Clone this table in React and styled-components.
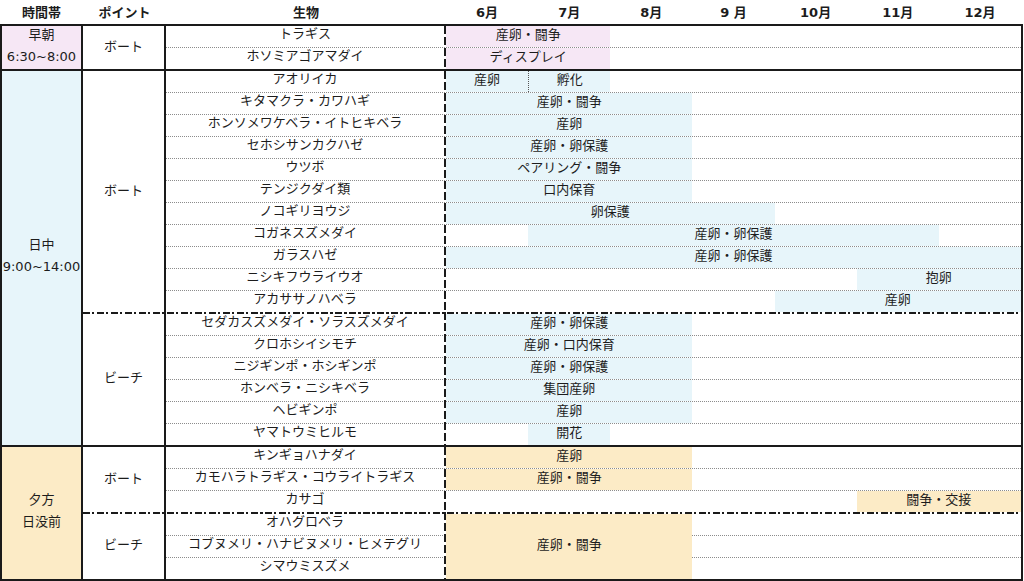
import React from "react";
import styled, { createGlobalStyle } from "styled-components";

const PINK = "#f6e7f5";
const BLUE = "#e7f5fa";
const ORANGE = "#fcebc6";

const GlobalStyle = createGlobalStyle`
  body {
    margin: 0;
    background: #fff;
    font-family: "DejaVu Sans", "Noto Sans CJK JP", sans-serif;
    color: #1c1c1c;
  }
`;

const months = ["6月", "7月", "8月", "9 月", "10月", "11月", "12月"];

const sections = [
  {
    time: ["早朝", "6:30~8:00"],
    color: PINK,
    groups: [
      {
        point: "ボート",
        rows: ["トラギス", "ホソミアゴアマダイ"],
        bands: [
          { row: 0, from: 0, to: 2, label: "産卵・闘争" },
          { row: 1, from: 0, to: 2, label: "ディスプレイ" },
        ],
      },
    ],
  },
  {
    time: ["日中", "9:00~14:00"],
    color: BLUE,
    groups: [
      {
        point: "ボート",
        rows: [
          "アオリイカ",
          "キタマクラ・カワハギ",
          "ホンソメワケベラ・イトヒキベラ",
          "セホシサンカクハゼ",
          "ウツボ",
          "テンジクダイ類",
          "ノコギリヨウジ",
          "コガネスズメダイ",
          "ガラスハゼ",
          "ニシキフウライウオ",
          "アカササノハベラ",
        ],
        bands: [
          { row: 0, from: 0, to: 1, label: "産卵" },
          { row: 0, from: 1, to: 2, label: "孵化", split: true },
          { row: 1, from: 0, to: 3, label: "産卵・闘争" },
          { row: 2, from: 0, to: 3, label: "産卵" },
          { row: 3, from: 0, to: 3, label: "産卵・卵保護" },
          { row: 4, from: 0, to: 3, label: "ペアリング・闘争" },
          { row: 5, from: 0, to: 3, label: "口内保育" },
          { row: 6, from: 0, to: 4, label: "卵保護" },
          { row: 7, from: 1, to: 6, label: "産卵・卵保護" },
          { row: 8, from: 0, to: 7, label: "産卵・卵保護" },
          { row: 9, from: 5, to: 7, label: "抱卵" },
          { row: 10, from: 4, to: 7, label: "産卵" },
        ],
      },
      {
        point: "ビーチ",
        divider: true,
        rows: [
          "セダカスズメダイ・ソラスズメダイ",
          "クロホシイシモチ",
          "ニジギンポ・ホシギンポ",
          "ホンベラ・ニシキベラ",
          "ヘビギンポ",
          "ヤマトウミヒルモ",
        ],
        bands: [
          { row: 0, from: 0, to: 3, label: "産卵・卵保護" },
          { row: 1, from: 0, to: 3, label: "産卵・口内保育" },
          { row: 2, from: 0, to: 3, label: "産卵・卵保護" },
          { row: 3, from: 0, to: 3, label: "集団産卵" },
          { row: 4, from: 0, to: 3, label: "産卵" },
          { row: 5, from: 1, to: 2, label: "開花" },
        ],
      },
    ],
  },
  {
    time: ["夕方", "日没前"],
    color: ORANGE,
    groups: [
      {
        point: "ボート",
        rows: [
          "キンギョハナダイ",
          "カモハラトラギス・コウライトラギス",
          "カサゴ",
        ],
        bands: [
          { row: 0, from: 0, to: 3, label: "産卵" },
          { row: 1, from: 0, to: 3, label: "産卵・闘争" },
          { row: 2, from: 5, to: 7, label: "闘争・交接" },
        ],
      },
      {
        point: "ビーチ",
        divider: true,
        rows: [
          "オハグロベラ",
          "コブヌメリ・ハナビヌメリ・ヒメテグリ",
          "シマウミスズメ",
        ],
        bands: [{ row: 0, span: 3, from: 0, to: 3, label: "産卵・闘争" }],
      },
    ],
  },
];

const Page = styled.div`
  width: 1023px;
  font-size: 13px;
`;

const Header = styled.div`
  display: flex;
  height: 24px;
  padding-right: 2px;
  font-weight: bold;
`;

const HeaderCell = styled.div`
  width: ${(p) => p.$width}px;
  display: flex;
  align-items: center;
  justify-content: center;
  padding-bottom: 2px;
  box-sizing: border-box;
`;

const MonthHeader = styled.div`
  flex: 1;
  display: grid;
  grid-template-columns: repeat(7, 1fr);
  align-items: center;
  text-align: center;
  padding-bottom: 2px;
`;

const Table = styled.div`
  border: 2px solid #1a1a1a;
`;

const Section = styled.div`
  display: flex;
  border-top: ${(p) => (p.$first ? "none" : "2px solid #1a1a1a")};
`;

const TimeCell = styled.div`
  width: 81px;
  box-sizing: border-box;
  flex-shrink: 0;
  border-right: 2px solid #1a1a1a;
  background: ${(p) => p.$color};
  display: flex;
  flex-direction: column;
  justify-content: center;
  align-items: center;
  line-height: 22px;
  white-space: nowrap;
`;

const TimeLabel = styled.div`
  margin-top: -4px;
  text-align: center;
`;

const Groups = styled.div`
  flex: 1;
  display: flex;
  flex-direction: column;
`;

const Group = styled.div`
  display: grid;
  grid-template-columns: 83px 280px repeat(7, 1fr);
  grid-template-rows: ${(p) =>
    `${p.$divider ? "2px " : ""}repeat(${p.$count - 1}, 22px) 21px`};
`;

const Divider = styled.div`
  grid-column: 1 / -1;
  grid-row: 1;
  background-image: repeating-linear-gradient(
    to right,
    #1a1a1a 0 7px,
    transparent 7px 9.5px,
    #1a1a1a 9.5px 11.5px,
    transparent 11.5px 14px
  );
`;

const PointCell = styled.div`
  grid-column: 1;
  grid-row: 1 / -1;
  border-right: 2px solid #1a1a1a;
  display: flex;
  align-items: center;
  justify-content: center;
  padding-bottom: 5px;
  box-sizing: border-box;
  min-height: 0;
`;

const RowLine = styled.div`
  grid-column: 2 / -1;
  grid-row: ${(p) => p.$row};
  border-bottom: ${(p) => (p.$last ? "none" : "1px dotted #8c8c8c")};
`;

const Band = styled.div`
  grid-column: ${(p) => `${p.$from + 3} / ${p.$to + 3}`};
  grid-row: ${(p) => `${p.$row} / span ${p.$span}`};
  margin-bottom: ${(p) => (p.$last ? 0 : 1)}px;
  background: ${(p) => p.$color};
  border-left: ${(p) => (p.$split ? "1px dotted #555" : "none")};
  display: flex;
  align-items: center;
  justify-content: center;
  padding-bottom: 4px;
  box-sizing: border-box;
  min-height: 0;
  line-height: 16px;
  white-space: nowrap;
`;

const Name = styled.div`
  grid-column: 2;
  grid-row: ${(p) => p.$row};
  height: 21px;
  line-height: 16px;
  padding: 0 2px 4px 0;
  box-sizing: border-box;
  text-align: center;
  white-space: nowrap;
`;

const SplitLine = styled.div`
  grid-column: 2;
  grid-row: 1 / -1;
  justify-self: end;
  width: 2px;
  background-image: repeating-linear-gradient(
    to bottom,
    #1a1a1a 0 8px,
    transparent 8px 11px
  );
`;

const GroupBlock = ({ group, color }) => {
  const offset = group.divider ? 1 : 0;
  const count = group.rows.length;
  return (
    <Group $divider={group.divider} $count={count}>
      {group.divider && <Divider />}
      {group.rows.map((name, i) => (
        <RowLine key={"l" + i} $row={offset + i + 1} $last={i === count - 1} />
      ))}
      {group.bands.map((b, i) => {
        const span = b.span || 1;
        return (
          <Band
            key={"b" + i}
            $from={b.from}
            $to={b.to}
            $row={offset + b.row + 1}
            $span={span}
            $last={b.row + span >= count}
            $split={b.split}
            $color={color}
          >
            {b.label}
          </Band>
        );
      })}
      {group.rows.map((name, i) => (
        <Name key={"n" + i} $row={offset + i + 1}>
          {name}
        </Name>
      ))}
      <PointCell>{group.point}</PointCell>
      <SplitLine />
    </Group>
  );
};

const App = () => {
  return (
    <Page>
      <GlobalStyle />
      <Header>
        <HeaderCell $width={83}>時間帯</HeaderCell>
        <HeaderCell $width={83}>ポイント</HeaderCell>
        <HeaderCell $width={280}>生物</HeaderCell>
        <MonthHeader>
          {months.map((m) => (
            <div key={m}>{m}</div>
          ))}
        </MonthHeader>
      </Header>
      <Table>
        {sections.map((s, i) => (
          <Section key={s.time[0]} $first={i === 0}>
            <TimeCell $color={s.color}>
              <TimeLabel>
                {s.time.map((t) => (
                  <div key={t}>{t}</div>
                ))}
              </TimeLabel>
            </TimeCell>
            <Groups>
              {s.groups.map((g) => (
                <GroupBlock key={g.point + g.rows[0]} group={g} color={s.color} />
              ))}
            </Groups>
          </Section>
        ))}
      </Table>
    </Page>
  );
};

export default App;
